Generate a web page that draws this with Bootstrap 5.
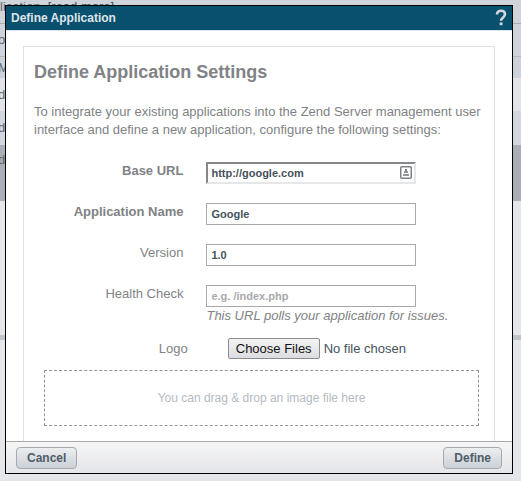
<!DOCTYPE html>
<html lang="en">
<head>
<meta charset="utf-8">
<meta name="viewport" content="width=device-width, initial-scale=1">
<title>Define Application</title>
<link href="https://cdn.jsdelivr.net/npm/bootstrap@5.3.0/dist/css/bootstrap.min.css" rel="stylesheet">
<style>
  body { font-family: "Liberation Sans", Arial, sans-serif; font-size: 13px; line-height: 18px; color: #808285; background: #e4e6ea; }

  /* page behind the dialog */
  .page-rows { font-size: 13px; color: #5a6670; background: #e4e6ea; text-indent: -2px; }
  .page-rows > div { line-height: 14px; white-space: nowrap; }
  .row-intro { height: 24px; background: #d0d3da; border-bottom: 1px solid #a9acb2; text-indent: 0; }
  .row-intro a { color: #3f4f5a; text-decoration: underline; }
  .row-tools { height: 33px; background: #d0d3da; border-bottom: 1px solid #b4b7bd; }
  .row-head { height: 21px; background: #cdd1d9; }
  .row-item { height: 33px; background: #e2e4e9; }
  .row-item-alt { background: #d3d6de; }
  .row-chosen { height: 57px; padding-top: 8px; background: #acaeb6; border-top: 1px solid #d3d6de; }
  .row-rest { height: 134px; }
  .row-end { height: 5px; background: #bfc3ca; }

  /* dialog */
  .dialog-layer { padding: 5px 8px 7px 5px; }
  .dialog-box { background: #fff; border: 1px solid #000; }
  .dialog-top { height: 25px; padding: 0 5px; background: #094f6e; border-bottom: 1px solid #dfe2e6; color: #dfe4e9; }
  .dialog-top h1 { font-size: 12px; line-height: 24px; }
  .help-btn { line-height: 0; }
  .dialog-main { padding: 15px 17px 0; overflow: hidden; }
  .settings { min-height: 100%; padding: 14px 10px 14px; border: 1px solid #e1e2e4; border-bottom: 0; }
  .settings h2 { font-size: 18px; line-height: 22px; margin-bottom: 20px; }
  .intro { margin-bottom: 23px; }
  .form-line { display: grid; grid-template-columns: 7fr 13fr; column-gap: 23px; height: 41px; }
  .form-line > label { text-align: right; line-height: 18px; }
  .form-line .field { width: 210px; height: 22px; padding: 0 4px; font-size: 11px; font-weight: bold; line-height: 18px; color: #46525b; border: 1px solid #a7a9ac; border-radius: 0; background: #fff; }
  .form-line .field::placeholder { color: #a7a9ac; }
  .form-line .field-inset { border: 2px solid; border-color: #85878b #e6e7e9 #e6e7e9 #85878b; padding-left: 3px; padding-right: 20px; }
  .fill-icon { right: 4px; top: 4px; line-height: 0; }
  .hint { line-height: 17px; }
  .file-line { display: grid; grid-template-columns: 3fr 5fr; column-gap: 40px; margin: 12px 0 11px; align-items: center; }
  .file-line > label { text-align: right; }
  .picker { font-size: 13px; line-height: 16px; color: #46525b; }
  .picker::file-selector-button { height: 21px; margin-right: 4px; padding: 0 7px; font-size: 13px; line-height: 18px; color: #111; background: linear-gradient(#f4f4f5, #dcdde0); border: 1px solid #8b8d90; border-radius: 2px; }
  .drop-zone { height: 56px; margin: 0 5px 0 10px; border: 1px dashed #939598; font-size: 12px; color: #b4bac2; }
  .dialog-bottom { height: 32px; padding: 0 10px; background: linear-gradient(#f6f6f7, #e4e5e8); border-top: 1px solid #a7a9ac; }
  .act { height: 22px; padding: 0 10px; font-size: 12px; font-weight: bold; line-height: 20px; color: #4f5d67; background: linear-gradient(#eceef0, #cbd0d7); border: 1px solid #a7a9ac; border-radius: 4px; }
</style>
<script src="https://cdn.jsdelivr.net/npm/bootstrap@5.3.0/dist/js/bootstrap.bundle.min.js"></script>
</head>
<body class="vh-100 overflow-hidden position-relative">
  <div class="page-rows" aria-hidden="true">
    <div class="row-intro">lication. <a href="#" tabindex="-1">[read more]</a></div>
    <div class="row-tools d-flex align-items-center">on</div>
    <div class="row-head d-flex align-items-center">M</div>
    <div class="row-item d-flex align-items-center">d</div>
    <div class="row-item row-item-alt d-flex align-items-center">d</div>
    <div class="row-chosen">d</div>
    <div class="row-rest"></div>
    <div class="row-end"></div>
  </div>

  <div class="dialog-layer position-absolute top-0 start-0 w-100 h-100">
    <form class="dialog-box d-flex flex-column h-100" role="dialog" aria-labelledby="dialogTitle" onsubmit="return false">
      <header class="dialog-top d-flex align-items-center justify-content-between">
        <h1 class="fw-bold m-0" id="dialogTitle">Define Application</h1>
        <button type="button" class="help-btn btn p-0 border-0" aria-label="Help">
          <svg width="12" height="18" viewBox="0 0 12 18"><path d="M2 5.5C2 3 3.6 1.8 6 1.8s4 1.3 4 3.5c0 3-3.9 3.2-3.9 6.4" fill="none" stroke="#d3d7db" stroke-width="2.6"/><rect x="4.7" y="13.4" width="2.8" height="2.8" fill="#d3d7db"/></svg>
        </button>
      </header>

      <main class="dialog-main flex-fill">
        <section class="settings">
          <h2 class="fw-bold">Define Application Settings</h2>
          <p class="intro">To integrate your existing applications into the Zend Server management user interface and define a new application, configure the following settings:</p>

          <div class="form-line">
            <label class="fw-bold" for="baseUrl">Base URL</label>
            <div>
              <div class="position-relative d-inline-block">
                <input class="field field-inset d-block" id="baseUrl" type="text" value="http://google.com">
                <span class="fill-icon position-absolute">
                  <svg width="12" height="13" viewBox="0 0 12 13"><rect x=".75" y=".75" width="10.5" height="11.5" rx="1" fill="#fff" stroke="#808285" stroke-width="1.5"/><rect x="5" y="3" width="2" height="2" fill="#808285"/><path d="M4 5h4v2H4zM3 8h6v2H3z" fill="#939598"/></svg>
                </span>
              </div>
            </div>
          </div>
          <div class="form-line">
            <label class="fw-bold" for="appName">Application Name</label>
            <div><input class="field d-block" id="appName" type="text" value="Google"></div>
          </div>
          <div class="form-line">
            <label for="version">Version</label>
            <div><input class="field d-block" id="version" type="text" value="1.0"></div>
          </div>
          <div class="form-line">
            <label for="health">Health Check</label>
            <div>
              <input class="field d-block" id="health" type="text" placeholder="e.g. /index.php" aria-describedby="healthHint">
              <em class="hint d-block text-nowrap" id="healthHint">This URL polls your application for issues.</em>
            </div>
          </div>
          <div class="file-line">
            <label for="logo">Logo</label>
            <input class="picker" id="logo" type="file" multiple>
          </div>
          <div class="drop-zone d-flex align-items-center justify-content-center">You can drag &amp; drop an image file here</div>
        </section>
      </main>

      <footer class="dialog-bottom d-flex align-items-center justify-content-between">
        <button type="button" class="act">Cancel</button>
        <button type="submit" class="act">Define</button>
      </footer>
    </form>
  </div>
</body>
</html>
